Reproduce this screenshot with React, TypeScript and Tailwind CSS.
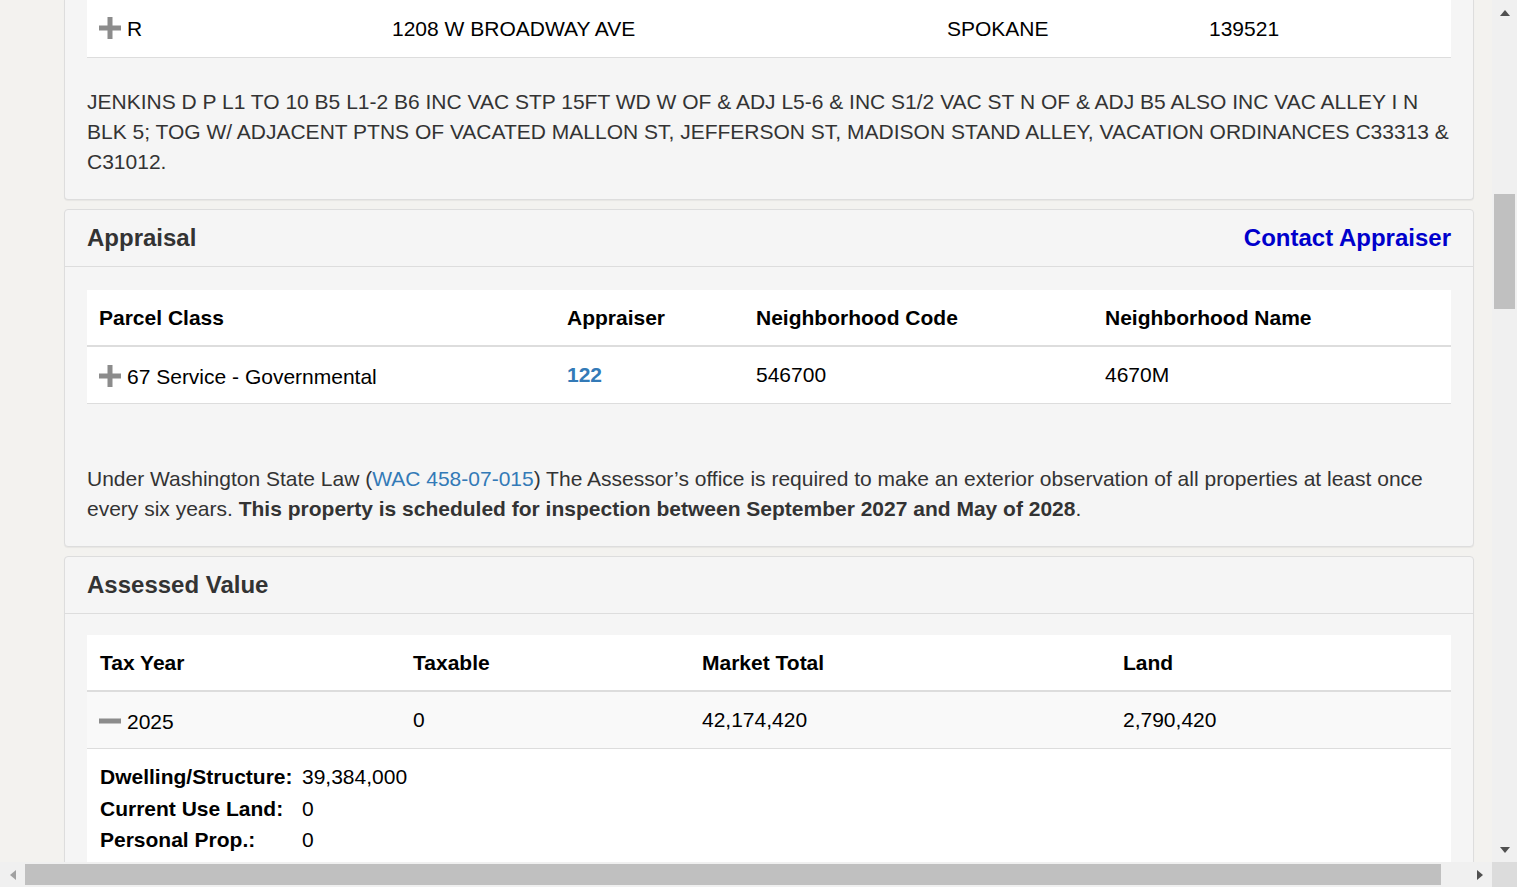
import React from 'react';

const Plus: React.FC = () => (
    <svg width="22" height="22" viewBox="0 0 22 22" className="inline-block mr-[6px] -mt-[4px] align-middle">
        <rect x="8.5" y="0" width="5" height="22" fill="#8c8c8c" />
        <rect x="0" y="8.5" width="22" height="5" fill="#8c8c8c" />
    </svg>
);

const Minus: React.FC = () => (
    <svg width="22" height="22" viewBox="0 0 22 22" className="inline-block mr-[6px] -mt-[4px] align-middle">
        <rect x="0" y="8.5" width="22" height="5" fill="#8c8c8c" />
    </svg>
);

const Panel: React.FC<{ title?: string; right?: React.ReactNode; className?: string; children: React.ReactNode }> = ({ title, right, className = '', children }) => (
    <div className={`bg-[#f5f5f5] border border-[#dddddd] rounded-[4px] shadow-[0_1px_1px_rgba(0,0,0,0.05)] ${className}`}>
        {title && (
            <div className="h-[57px] px-[22px] flex items-center justify-between border-b border-[#dddddd]">
                <h3 className="text-[24px] font-bold text-[#333333]">{title}</h3>
                {right}
            </div>
        )}
        <div className="px-[22px]">{children}</div>
    </div>
);

const App: React.FC = () => {
    return (
        <div className="w-[1517px] h-[887px] overflow-hidden flex flex-col bg-[#f3f2ef] font-['Liberation_Sans',Arial,sans-serif] text-[21px] text-black">
            <div className="flex flex-1 min-h-0">
                <div className="flex-1 min-w-0 pl-[64px] pr-[18px] flex flex-col gap-[9px]">
                    {/* Legal description panel (scrolled, top is off-screen) */}
                    <div className="bg-[#f5f5f5] border border-t-0 border-[#dddddd] rounded-b-[4px] shadow-[0_1px_1px_rgba(0,0,0,0.05)] px-[22px] pb-[22px]">
                        <div className="bg-white border-t border-b border-[#dddddd] h-[59px] flex items-center -mt-[1px]">
                            <div className="w-[293px] pl-[12px]"><Plus />R</div>
                            <div className="w-[555px] pl-[12px]">1208 W BROADWAY AVE</div>
                            <div className="w-[262px] pl-[12px]">SPOKANE</div>
                            <div className="flex-1 pl-[12px]">139521</div>
                        </div>
                        <p className="mt-[29px] leading-[30px] text-[#333333]">
                            JENKINS D P L1 TO 10 B5 L1-2 B6 INC VAC STP 15FT WD W OF &amp; ADJ L5-6 &amp; INC S1/2 VAC ST N OF &amp; ADJ B5 ALSO INC VAC ALLEY I N BLK 5; TOG W/ ADJACENT PTNS OF VACATED MALLON ST, JEFFERSON ST, MADISON STAND ALLEY, VACATION ORDINANCES C33313 &amp; C31012.
                        </p>
                    </div>

                    {/* Appraisal */}
                    <Panel
                        title="Appraisal"
                        right={<a className="text-[24px] font-bold text-[#0000cc]">Contact Appraiser</a>}
                        className="shrink-0"
                    >
                        <div className="mt-[23px] bg-white">
                            <div className="flex items-center h-[57px] font-bold border-b-2 border-[#dddddd]">
                                <div className="w-[468px] pl-[12px]">Parcel Class</div>
                                <div className="w-[189px] pl-[12px]">Appraiser</div>
                                <div className="w-[349px] pl-[12px]">Neighborhood Code</div>
                                <div className="flex-1 pl-[12px]">Neighborhood Name</div>
                            </div>
                            <div className="flex items-center h-[57px] border-b border-[#dddddd]">
                                <div className="w-[468px] pl-[12px] pt-[3px]"><Plus />67 Service - Governmental</div>
                                <div className="w-[189px] pl-[12px]"><a className="font-bold text-[#337ab7]">122</a></div>
                                <div className="w-[349px] pl-[12px]">546700</div>
                                <div className="flex-1 pl-[12px]">4670M</div>
                            </div>
                        </div>
                        <p className="mt-[60px] mb-[22px] leading-[30px] text-[#333333]">
                            Under Washington State Law (<a className="text-[#337ab7]">WAC 458-07-015</a>) The Assessor’s office is required to make an exterior observation of all properties at least once every six years. <strong>This property is scheduled for inspection between September 2027 and May of 2028</strong>.
                        </p>
                    </Panel>

                    {/* Assessed Value */}
                    <Panel title="Assessed Value" className="shrink-0">
                        <div className="mt-[21px] bg-white">
                            <div className="flex items-center h-[57px] font-bold border-b-2 border-[#dddddd]">
                                <div className="w-[314px] pl-[13px]">Tax Year</div>
                                <div className="w-[289px] pl-[12px]">Taxable</div>
                                <div className="w-[421px] pl-[12px]">Market Total</div>
                                <div className="flex-1 pl-[12px]">Land</div>
                            </div>
                            <div className="flex items-center h-[57px] bg-[#f9f9f9] border-b border-[#dddddd]">
                                <div className="w-[314px] pl-[12px] pt-[3px]"><Minus />2025</div>
                                <div className="w-[289px] pl-[12px]">0</div>
                                <div className="w-[421px] pl-[12px]">42,174,420</div>
                                <div className="flex-1 pl-[12px]">2,790,420</div>
                            </div>
                            <div className="pt-[12px] pb-[40px] pl-[13px] leading-[31.5px]">
                                <div className="flex"><span className="w-[202px] font-bold">Dwelling/Structure:</span><span>39,384,000</span></div>
                                <div className="flex"><span className="w-[202px] font-bold">Current Use Land:</span><span>0</span></div>
                                <div className="flex"><span className="w-[202px] font-bold">Personal Prop.:</span><span>0</span></div>
                            </div>
                        </div>
                    </Panel>
                </div>

                {/* vertical scrollbar */}
                <div className="w-[25px] bg-[#f0f0f0] flex flex-col items-center">
                    <div className="h-[25px] flex items-center justify-center">
                        <svg width="10" height="6" viewBox="0 0 10 6"><path d="M0 6 L5 0 L10 6 Z" fill="#505050" /></svg>
                    </div>
                    <div className="mt-[169px] w-[21px] h-[115px] bg-[#c0c0c0]" />
                    <div className="flex-1" />
                    <div className="h-[25px] flex items-center justify-center">
                        <svg width="10" height="6" viewBox="0 0 10 6"><path d="M0 0 L10 0 L5 6 Z" fill="#505050" /></svg>
                    </div>
                </div>
            </div>

            {/* horizontal scrollbar */}
            <div className="h-[25px] flex shrink-0">
                <div className="flex-1 bg-[#f0f0f0] flex items-center">
                    <div className="w-[25px] flex items-center justify-center">
                        <svg width="6" height="10" viewBox="0 0 6 10"><path d="M6 0 L6 10 L0 5 Z" fill="#a0a0a0" /></svg>
                    </div>
                    <div className="w-[1416px] h-[21px] bg-[#c0c0c0]" />
                    <div className="flex-1" />
                    <div className="w-[25px] flex items-center justify-center">
                        <svg width="6" height="10" viewBox="0 0 6 10"><path d="M0 0 L6 5 L0 10 Z" fill="#505050" /></svg>
                    </div>
                </div>
                <div className="w-[25px] bg-[#dcdcdc]" />
            </div>
        </div>
    );
};

export default App;
